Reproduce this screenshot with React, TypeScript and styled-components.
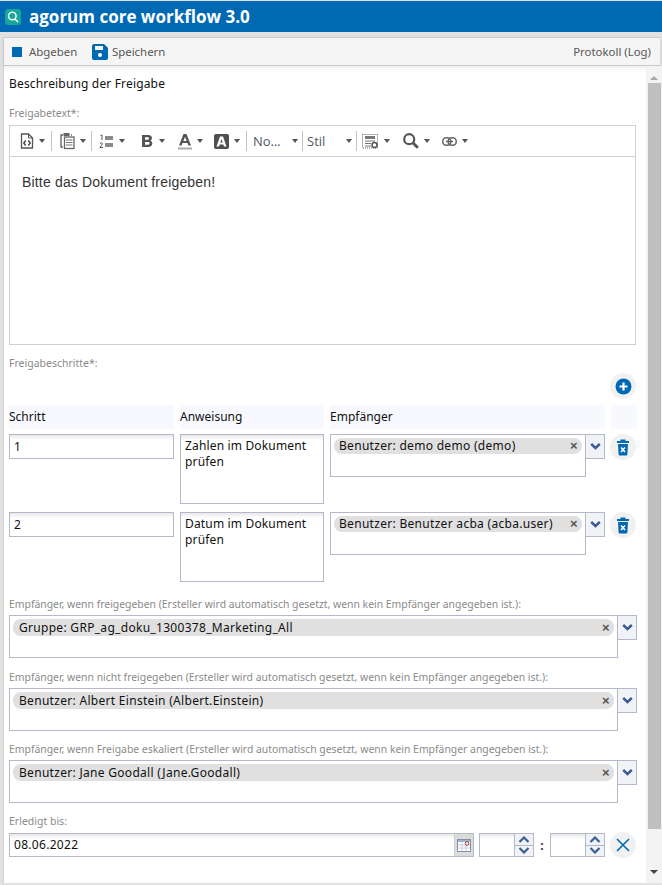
import React from "react";
import styled, { createGlobalStyle } from "styled-components";

const Global = createGlobalStyle`
  html, body { margin: 0; padding: 0; background: #e1e1e1; }
  body { font-family: "Noto Sans", "Open Sans", sans-serif; font-size: 12px; color: #111; }
  * { box-sizing: border-box; }
`;
const Page = styled.div`width: 662px; height: 885px; overflow: hidden; display: flex; flex-direction: column; background: #e1e1e1; padding-top: 1px;`;
const TitleBar = styled.div`height: 31px; background: #0069b4; display: flex; align-items: center; gap: 8px; padding-left: 5px; flex: none;`;
const TitleText = styled.span`font: 700 17px "Open Sans", sans-serif; color: #fff;`;
const Window = styled.div`margin: 5px 2px 2px 3px; flex: 1; min-height: 0; display: flex; flex-direction: column; border: 1px solid #cfcfcf; border-width: 1px 0 0 1px; background: #fff;`;
const Toolbar = styled.div`height: 28px; flex: none; background: #f5f5f5; border-bottom: 1px solid #c8c8c8; box-shadow: 0 2px 5px rgba(0,0,0,.08); display: flex; align-items: center; padding: 0 9px 0 8px; color: #555; font-size: 11.4px; position: relative;`;
const ToolItem = styled.span<{ $w: number; $gap: number }>`display: flex; align-items: center; gap: ${p => p.$gap}px; width: ${p => p.$w}px;`;
const ToolSpacer = styled.span`flex: 1;`;
const Body = styled.div`flex: 1; min-height: 0; display: flex;`;
const Content = styled.div`width: 641px; padding: 9px 0 0 5px; flex: none;`;
const Heading = styled.div`height: 17px; line-height: 17px; color: #111; letter-spacing: .16px;`;
const Label = styled.div<{ $top: number }>`font-size: 10.5px; line-height: 14px; height: 14px; color: #8a8a8a; margin-top: ${p => p.$top}px;`;
const Editor = styled.div`margin-top: 5px; width: 627px; height: 220px; border: 1px solid #d0d0d0; display: flex; flex-direction: column;`;
const EditorBar = styled.div`height: 31px; border-bottom: 1px solid #d0d0d0; display: flex; align-items: center; padding-left: 9px; flex: none; color: #555;`;
const EditorText = styled.div`padding: 17px 12px; font: 14px "Liberation Sans", sans-serif; letter-spacing: .17px; line-height: 17px; color: #333;`;
const Group = styled.span<{ $w: number; $pad: number; $line?: boolean }>`
  display: flex; align-items: center; width: ${p => p.$w}px; height: 20px; flex: none; gap: 3px; padding-left: ${p => p.$pad}px;
  border-right: ${p => (p.$line ? "1px solid #c4c4c4" : "none")};
`;
const SelectGroup = styled(Group)`padding-right: 4px;`;
const Caret = styled.span`width: 0; height: 0; border: 3.5px solid transparent; border-top: 4px solid #555; border-bottom: 0; margin-left: 2px; flex: none;`;
const BarLabel = styled.span`font: 13px "Open Sans", sans-serif; color: #4b5a6a; flex: 1;`;
const AddRow = styled.div`display: flex; justify-content: flex-end; width: 627px; margin-top: 3px; height: 26px;`;
const Circle = styled.button`width: 26px; height: 26px; border-radius: 50%; border: 0; padding: 0; background: #f1f1f1; display: flex; align-items: center; justify-content: center; flex: none;`;
const StepGrid = styled.div`display: grid; grid-template-columns: 165px 144px 275px 26px; column-gap: 6px; width: 628px;`;
const HeadCell = styled.div`height: 24px; line-height: 24px; background: #f8f9ff; margin-top: 6px; margin-bottom: 5px; color: #111; font-size: 12px; &:last-child { margin-left: -1px; }`;
const RowCell = styled.div`height: 78px; display: flex; align-items: flex-start; &:nth-child(4n) { margin-left: -1px; }`;
const Field = styled.div<{ $w?: number }>`
  height: 25px; width: ${p => (p.$w ? `${p.$w}px` : "100%")}; border: 1px solid #b5b8c8; padding-left: 4px; line-height: 23px; letter-spacing: .3px;
  background: linear-gradient(#e8e8e8 0, #fff 5px); flex: none;
`;
const Area = styled.div`width: 144px; height: 70px; border: 1px solid #b5b8c8; padding: 3px 4px; line-height: 16px; letter-spacing: .16px; background: linear-gradient(#e8e8e8 0, #fff 5px);`;
const Combo = styled.div<{ $w: number }>`display: flex; align-items: flex-start; width: ${p => p.$w}px;`;
const ComboBox = styled.div`flex: 1; height: 43px; border: 1px solid #b5b8c8; padding: 3px;`;
const Chip = styled.div<{ $h: number; $left: number }>`height: ${p => p.$h}px; border-radius: 8px; background: #e0e0e0; display: flex; align-items: center; justify-content: space-between; padding: 0 4px 0 ${p => p.$left}px; line-height: 16px; letter-spacing: .3px; color: #111;`;
const ChipX = styled.span`font: 700 13px "Liberation Sans", sans-serif; color: #555; line-height: 14px;`;
const ComboBtn = styled.div`width: 19px; height: 25px; border: 1px solid #b5b8c8; border-left: 0; background: #f1f2f6; display: flex; align-items: center; justify-content: center; flex: none;`;
const LabelLong = styled(Label)`font-size: 10.4px;`;
const Section = styled.div`margin-top: 4px; height: 45px;`;
const DateRow = styled.div`display: flex; align-items: center; margin-top: 4px; width: 627px; height: 26px;`;
const DateField = styled(Field)`height: 24px; line-height: 22px; border-right: 0;`;
const CalBtn = styled.div`width: 20px; height: 24px; background: #dcdcdc; border: 1px solid #b5b8c8; border-left: 1px solid #ccc; display: flex; align-items: center; justify-content: center; flex: none; margin-right: 5px;`;
const SpinField = styled(Field)`height: 24px; border-right: 0;`;
const SpinBtns = styled.div`width: 20px; height: 24px; border: 1px solid #b5b8c8; background: #f1f2f6; display: flex; flex-direction: column; flex: none;`;
const SpinHalf = styled.div`flex: 1; display: flex; align-items: center; justify-content: center; &:first-child { border-bottom: 1px solid #b5b8c8; }`;
const Colon = styled.span`width: 16px; text-align: center; font-weight: 700; color: #333; flex: none;`;
const Push = styled.span`flex: 1;`;
const Scroll = styled.div`width: 16px; margin-left: 1px; flex: none; background: #f3f3f3; display: flex; flex-direction: column; align-items: center; position: relative;`;
const ScrollTop = styled.div`height: 17px; display: flex; align-items: flex-end; padding-bottom: 3px;`;
const Thumb = styled.div`width: 13px; height: 746px; background: #bfbfbf;`;
const ArrowUp = styled.span`width:0;height:0;border:4px solid transparent;border-bottom:4px solid #a8a8a8;border-top:0;`;
const ArrowDown = styled.span`width:0;height:0;border:4px solid transparent;border-top:4px solid #444;border-bottom:0;margin-top:41px;`;

const Chev = () => (
  <svg width="11" height="7" viewBox="0 0 11 7"><path d="M1.200 1 5.500 5 9.800 1" fill="none" stroke="#3c5a93" strokeWidth="2.400" /></svg>
);
const ChevUp = () => (
  <svg width="12" height="7" viewBox="0 0 12 7"><path d="M1.500 6 6 1.500 10.500 6" fill="none" stroke="#3c6093" strokeWidth="2.200" /></svg>
);
const ChevDown = () => (
  <svg width="12" height="7" viewBox="0 0 12 7"><path d="M1.500 1 6 5.500 10.500 1" fill="none" stroke="#3c6093" strokeWidth="2.200" /></svg>
);
const Trash = () => (
  <svg width="12" height="17" viewBox="0 0 12 17"><path d="M0 2h3.500V.500h5V2H12v2H0z" fill="#0069b4" /><path d="M1 5h10l-.6 10.500a1.200 1.200 0 0 1-1.200 1H2.800a1.200 1.200 0 0 1-1.200-1z" fill="#0069b4" /><path d="m4 8.500 4 4.500M8 8.500 4 13" stroke="#fff" strokeWidth="1.600" /></svg>
);
const Recipient = ({ name, w }: { name: string; w: number }) => (
  <Combo $w={w}>
    <ComboBox><Chip $h={w > 300 ? 17 : 16} $left={w > 300 ? 6 : 5}><span>{name}</span><ChipX>×</ChipX></Chip></ComboBox>
    <ComboBtn><Chev /></ComboBtn>
  </Combo>
);

const IcoSource = () => (
  <svg width="14" height="16" viewBox="0 0 14 16"><path d="M1.500 1h7l4 4v10h-11z" fill="none" stroke="#555" strokeWidth="1.300" /><path d="M8.500 1v4h4" fill="none" stroke="#555" /><path d="M5.700 7.500 3.800 10l1.900 2.500M8.300 7.500l1.900 2.500-1.900 2.500" fill="none" stroke="#444" strokeWidth="1.400" /></svg>
);
const IcoPaste = () => (
  <svg width="15" height="18" viewBox="0 0 15 18"><path d="M3 3H1v12h2M11 3h1" fill="none" stroke="#666" strokeWidth="1.400" /><rect x="3.500" y="1" width="6" height="3" fill="#666" /><rect x="4.500" y="5" width="9.500" height="11.500" fill="none" stroke="#666" strokeWidth="1.300" /><path d="M6 8h6.500M6 10.500h6.500M6 13h6.500" stroke="#777" /></svg>
);
const IcoList = () => (
  <svg width="15" height="15" viewBox="0 0 15 15"><path d="M6 3h8M6 5h8M6 10h8M6 12h8" stroke="#666" strokeWidth="1.300" /><path d="M1.500 1.500 3 1v5" fill="none" stroke="#555" /><path d="M1 9.500q1.500-1.500 2.500 0Q3 11 1 13.500h3" fill="none" stroke="#555" /></svg>
);
const IcoBold = () => (
  <svg width="13" height="14" viewBox="0 0 13 14"><path fillRule="evenodd" d="M1 1h6.500c4 0 4.500 5 1.800 5.800C12.500 7.500 12 13 7.500 13H1zM4 3.300v2.500h3c1.400 0 1.400-2.500 0-2.500zM4 8v2.700h3.300c1.700 0 1.700-2.700 0-2.700z" fill="#555" /></svg>
);
const IcoColor = () => (
  <svg width="14" height="17" viewBox="0 0 14 17"><path fillRule="evenodd" d="M5.500 1h3L13 12.500h-2.600l-.9-2.500h-5l-.9 2.500H1zM7 4 5.300 8h3.400z" fill="#555" /><rect x="0" y="14.500" width="14" height="2" fill="#aaa" /></svg>
);
const IcoBg = () => (
  <svg width="15" height="15" viewBox="0 0 15 15"><rect width="15" height="15" rx="2" fill="#4f4f4f" /><path fillRule="evenodd" d="M6 2.500h3l3.500 10H10l-.7-2H5.700l-.7 2H2.500zM7.500 5 6.300 8.500h2.400z" fill="#fff" /></svg>
);
const IcoTable = () => (
  <svg width="17" height="15" viewBox="0 0 17 15"><rect x="0.500" y="0.500" width="15" height="13.500" fill="none" stroke="#666" strokeDasharray="1 1" /><rect x="3" y="2" width="10" height="3" fill="#777" /><path d="M3 7h10M3 9.500h6M3 12h6" stroke="#777" strokeWidth="1.200" /><circle cx="12.500" cy="11" r="2.500" fill="#fff" stroke="#555" strokeWidth="1.500" /></svg>
);
const IcoSearch = () => (
  <svg width="16" height="16" viewBox="0 0 16 16"><circle cx="6.200" cy="6.200" r="5" fill="none" stroke="#555" strokeWidth="2.200" /><path d="m9.800 9.800 5 5" stroke="#555" strokeWidth="2.800" /></svg>
);
const IcoLink = () => (
  <svg width="15" height="9" viewBox="0 0 15 9"><rect x="0.800" y="0.800" width="8" height="7.400" rx="3.500" fill="none" stroke="#666" strokeWidth="1.500" /><rect x="6.200" y="0.800" width="8" height="7.400" rx="3.500" fill="none" stroke="#666" strokeWidth="1.500" /><path d="M4 4.500h7" stroke="#666" strokeWidth="1.500" /></svg>
);

export default function App() {
  return (
    <Page>
      <Global />
      <TitleBar>
        <svg width="16" height="16" viewBox="0 0 16 16"><rect width="16" height="16" rx="3" fill="#16a79a" /><circle cx="7.300" cy="7" r="3.800" fill="none" stroke="#fff" strokeWidth="1.500" /><path d="m10 10 3 3" stroke="#fff" strokeWidth="1.600" /></svg>
        <TitleText>agorum core workflow 3.0</TitleText>
      </TitleBar>
      <Window>
        <Toolbar>
          <ToolItem $w={80} $gap={7}>
            <svg width="10" height="10" viewBox="0 0 10 10"><rect width="10" height="10" fill="#0069b4" /></svg>
            Abgeben
          </ToolItem>
          <ToolItem $w={90} $gap={4}>
            <svg width="16" height="16" viewBox="0 0 16 16"><path fillRule="evenodd" d="M2 0h10l4 4v10a2 2 0 0 1-2 2H2a2 2 0 0 1-2-2V2a2 2 0 0 1 2-2zM3 2v4h8V2z" fill="#0069b4" /><circle cx="8" cy="11" r="2" fill="#fff" /></svg>
            Speichern
          </ToolItem>
          <ToolSpacer />
          Protokoll (Log)
        </Toolbar>
        <Body>
          <Content>
            <Heading>Beschreibung der Freigabe</Heading>
            <Label $top={14}>Freigabetext*:</Label>
            <Editor>
              <EditorBar>
                <Group $w={33} $pad={1} $line><IcoSource /><Caret /></Group>
                <Group $w={40} $pad={8} $line><IcoPaste /><Caret /></Group>
                <Group $w={43} $pad={7}><IcoList /><Caret /></Group>
                <Group $w={38} $pad={6}><IcoBold /><Caret /></Group>
                <Group $w={36} $pad={5}><IcoColor /><Caret /></Group>
                <Group $w={38} $pad={5} $line><IcoBg /><Caret /></Group>
                <SelectGroup $w={56} $pad={6} $line><BarLabel>No…</BarLabel><Caret /></SelectGroup>
                <SelectGroup $w={54} $pad={4} $line><BarLabel>Stil</BarLabel><Caret /></SelectGroup>
                <Group $w={41} $pad={5}><IcoTable /><Caret /></Group>
                <Group $w={39} $pad={5}><IcoSearch /><Caret /></Group>
                <Group $w={40} $pad={5}><IcoLink /><Caret /></Group>
              </EditorBar>
              <EditorText>Bitte das Dokument freigeben!</EditorText>
            </Editor>
            <Label $top={11}>Freigabeschritte*:</Label>
            <AddRow>
              <Circle><svg width="17" height="17" viewBox="0 0 17 17"><circle cx="8.500" cy="8.500" r="8" fill="#0069b4" /><path d="M8.500 4.500v8M4.500 8.500h8" stroke="#fff" strokeWidth="2.200" /></svg></Circle>
            </AddRow>
            <StepGrid>
              <HeadCell>Schritt</HeadCell>
              <HeadCell>Anweisung</HeadCell>
              <HeadCell>Empfänger</HeadCell>
              <HeadCell />
              <RowCell><Field>1</Field></RowCell>
              <RowCell><Area>Zahlen im Dokument prüfen</Area></RowCell>
              <RowCell><Recipient name="Benutzer: demo demo (demo)" w={275} /></RowCell>
              <RowCell><Circle><Trash /></Circle></RowCell>
              <RowCell><Field>2</Field></RowCell>
              <RowCell><Area>Datum im Dokument prüfen</Area></RowCell>
              <RowCell><Recipient name="Benutzer: Benutzer acba (acba.user)" w={275} /></RowCell>
              <RowCell><Circle><Trash /></Circle></RowCell>
            </StepGrid>
            <LabelLong $top={7}>Empfänger, wenn freigegeben (Ersteller wird automatisch gesetzt, wenn kein Empfänger angegeben ist.):</LabelLong>
            <Section><Recipient name="Gruppe: GRP_ag_doku_1300378_Marketing_All" w={628} /></Section>
            <LabelLong $top={10}>Empfänger, wenn nicht freigegeben (Ersteller wird automatisch gesetzt, wenn kein Empfänger angegeben ist.):</LabelLong>
            <Section><Recipient name="Benutzer: Albert Einstein (Albert.Einstein)" w={628} /></Section>
            <LabelLong $top={9}>Empfänger, wenn Freigabe eskaliert (Ersteller wird automatisch gesetzt, wenn kein Empfänger angegeben ist.):</LabelLong>
            <Section><Recipient name="Benutzer: Jane Goodall (Jane.Goodall)" w={628} /></Section>
            <Label $top={9}>Erledigt bis:</Label>
            <DateRow>
              <DateField $w={445}>08.06.2022</DateField>
              <CalBtn><svg width="14" height="13" viewBox="0 0 14 13"><rect x=".5" y=".5" width="13" height="12" fill="#fff" stroke="#7f93ad" /><rect x="1" y="1" width="12" height="2" fill="#9fb3cc" /><path d="M1 6h12M1 9h12M5 3v9M9 3v9" stroke="#ccd" /><circle cx="10" cy="4.500" r="1.800" fill="#fff" stroke="#a33" /></svg></CalBtn>
              <SpinField $w={35} />
              <SpinBtns><SpinHalf><ChevUp /></SpinHalf><SpinHalf><ChevDown /></SpinHalf></SpinBtns>
              <Colon>:</Colon>
              <SpinField $w={35} />
              <SpinBtns><SpinHalf><ChevUp /></SpinHalf><SpinHalf><ChevDown /></SpinHalf></SpinBtns>
              <Push />
              <Circle><svg width="14" height="14" viewBox="0 0 14 14"><path d="m1 1 12 12M13 1 1 13" stroke="#0069b4" strokeWidth="1.600" /></svg></Circle>
            </DateRow>
          </Content>
          <Scroll>
            <ScrollTop><ArrowUp /></ScrollTop>
            <Thumb />
            <ArrowDown />
          </Scroll>
        </Body>
      </Window>
    </Page>
  );
}
